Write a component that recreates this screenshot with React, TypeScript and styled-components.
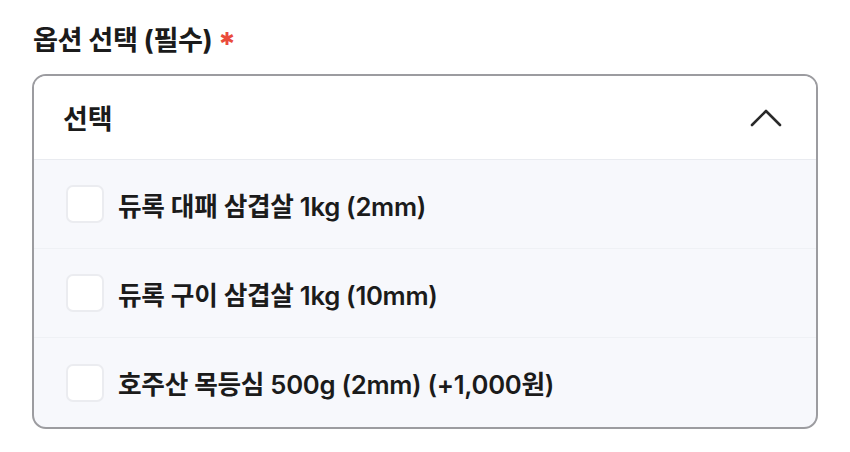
import React, { useState } from "react";
import styled, { createGlobalStyle } from "styled-components";

const GlobalStyle = createGlobalStyle`
  html, body { margin: 0; padding: 0; background: #ffffff; }
  body {
    font-family: Inter, "Noto Sans CJK KR", "Noto Sans", sans-serif;
    color: #1a1a1a;
    -webkit-font-smoothing: antialiased;
  }
`;

const Field = styled.div`
  width: 786px;
  padding: 18px 0 0 32px;
`;

const Label = styled.div`
  display: flex;
  align-items: center;
  gap: 7px;
  height: 40px;
  font-size: 27.2px;
  font-weight: 700;
  letter-spacing: -0.4px;
  color: #1b1b1b;
  margin-left: 1px;
`;

const Required = styled.span`
  color: #ea4b3c;
  font-family: "DejaVu Sans", sans-serif;
  font-size: 18px;
  font-weight: 700;
  line-height: 1;
  transform: translateY(1px);
`;

const Box = styled.div`
  margin-top: 16px;
  border: 2px solid #9c9ca0;
  border-radius: 14px;
  overflow: hidden;
  background: #f7f8fc;
`;

const Header = styled.button`
  all: unset;
  box-sizing: border-box;
  width: 100%;
  height: 84px;
  display: flex;
  align-items: center;
  justify-content: space-between;
  padding: 0 34px 0 29px;
  background: #ffffff;
  border-bottom: 1px solid #e9ebf0;
  cursor: pointer;
  font-size: 27px;
  font-weight: 700;
  color: #1b1b1b;
`;

const List = styled.ul`
  list-style: none;
  margin: 0;
  padding: 0;
`;

const Row = styled.li<{ $last?: boolean }>`
  height: 89px;
  display: flex;
  align-items: center;
  gap: 14px;
  padding-left: 32px;
  box-sizing: border-box;
  border-bottom: ${(p) => (p.$last ? "none" : "1px solid #eff1f5")};
  font-size: 25.7px;
  font-weight: 600;
  letter-spacing: -0.3px;
  color: #1b1b1b;
  cursor: pointer;
`;

const Check = styled.span<{ $on: boolean }>`
  width: 34px;
  height: 34px;
  border-radius: 7px;
  border: 2px solid #ebecf0;
  background: ${(p) => (p.$on ? "#1b1b1b" : "#ffffff")};
  flex: none;
`;

const options = [
  "듀록 대패 삼겹살 1kg (2mm)",
  "듀록 구이 삼겹살 1kg (10mm)",
  "호주산 목등심 500g (2mm) (+1,000원)",
];

function Chevron() {
  return (
    <svg width="32" height="20" viewBox="0 0 32 20" fill="none">
      <path d="M2 17 L16 3 L30 17" stroke="#2a2a2a" strokeWidth="2.6" strokeLinecap="round" strokeLinejoin="round" />
    </svg>
  );
}

export default function App() {
  const [picked, setPicked] = useState<boolean[]>([false, false, false]);
  const toggle = (i: number) =>
    setPicked((prev) => prev.map((v, j) => (j === i ? !v : v)));

  return (
    <>
      <GlobalStyle />
      <Field>
        <Label>
          옵션 선택 (필수)
          <Required>✱</Required>
        </Label>
        <Box>
          <Header>
            선택
            <Chevron />
          </Header>
          <List>
            {options.map((o, i) => (
              <Row key={o} $last={i === options.length - 1} onClick={() => toggle(i)}>
                <Check $on={picked[i]} />
                {o}
              </Row>
            ))}
          </List>
        </Box>
      </Field>
    </>
  );
}
